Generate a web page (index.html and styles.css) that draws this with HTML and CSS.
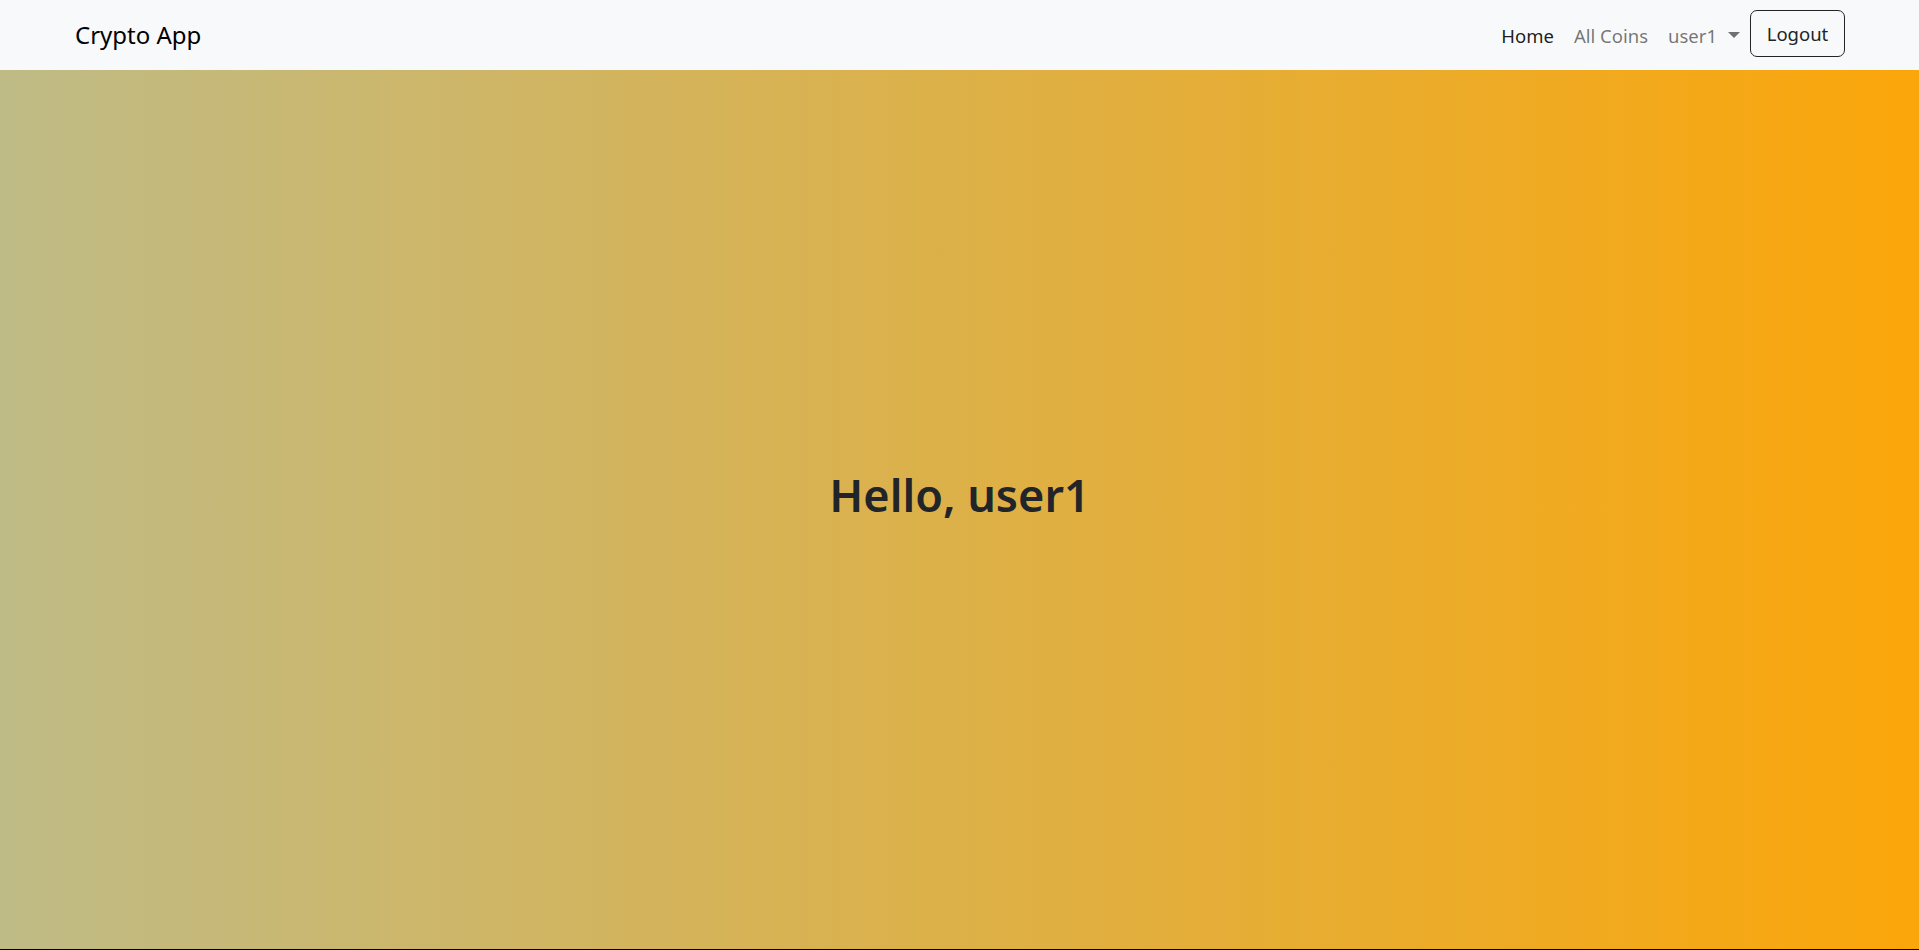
FILE: index.html
```html
<!DOCTYPE html>
<html lang="en">
<head>
<meta charset="utf-8">
<title>Crypto App</title>
<link rel="stylesheet" href="styles.css">
</head>
<body>
<nav class="navbar">
  <div class="nav-inner">
    <a class="brand" href="#">Crypto App</a>
    <div class="nav-right">
      <a class="nav-link active" href="#">Home</a>
      <a class="nav-link" href="#">All Coins</a>
      <a class="nav-link dropdown" href="#">user1<span class="caret"></span></a>
      <button class="btn-logout" type="button">Logout</button>
    </div>
  </div>
</nav>
<main class="hero">
  <h1 class="greeting">Hello, user1</h1>
</main>
</body>
</html>
```
FILE: styles.css
```css
* { box-sizing: border-box; }
html, body { margin: 0; padding: 0; }
body {
  font-family: "Noto Sans", "Open Sans", sans-serif;
  color: #212529;
  height: 950px;
  display: flex;
  flex-direction: column;
  overflow: hidden;
}
.navbar {
  height: 70px;
  background: #f8f9fa;
  flex: none;
}
.nav-inner {
  height: 100%;
  padding: 0 74px 0 75px;
  display: flex;
  align-items: center;
  justify-content: space-between;
}
.brand {
  font-size: 24px;
  color: #000;
  text-decoration: none;
  margin-top: -2px;
}
.nav-right {
  display: flex;
  align-items: center;
}
.nav-link {
  font-size: 18.5px;
  color: rgba(0,0,0,0.55);
  text-decoration: none;
  padding: 0 10px;
  display: flex;
  align-items: center;
}
.nav-link.active { color: rgba(0,0,0,0.9); }
.nav-link:first-child { padding-left: 0; }
.caret {
  display: inline-block;
  margin-left: 11px;
  width: 0; height: 0;
  border-top: 6px solid rgba(0,0,0,0.55);
  border-left: 6px solid transparent;
  border-right: 6px solid transparent;
}
.dropdown { padding-right: 10px; }
.btn-logout {
  font-family: inherit;
  font-size: 18.5px;
  color: #212529;
  background: transparent;
  border: 1px solid #212529;
  border-radius: 7px;
  width: 95px;
  height: 47px;
  padding: 0;
  margin-top: -3px;
}
.hero {
  flex: 1;
  background: linear-gradient(to right, #bfbb86, #fba60a);
  border-bottom: 1px solid #000;
  display: flex;
  align-items: center;
  justify-content: center;
}
.greeting {
  margin: 0 0 30px 0;
  font-size: 45px;
  font-weight: 600;
  line-height: 1.2;
}
```
